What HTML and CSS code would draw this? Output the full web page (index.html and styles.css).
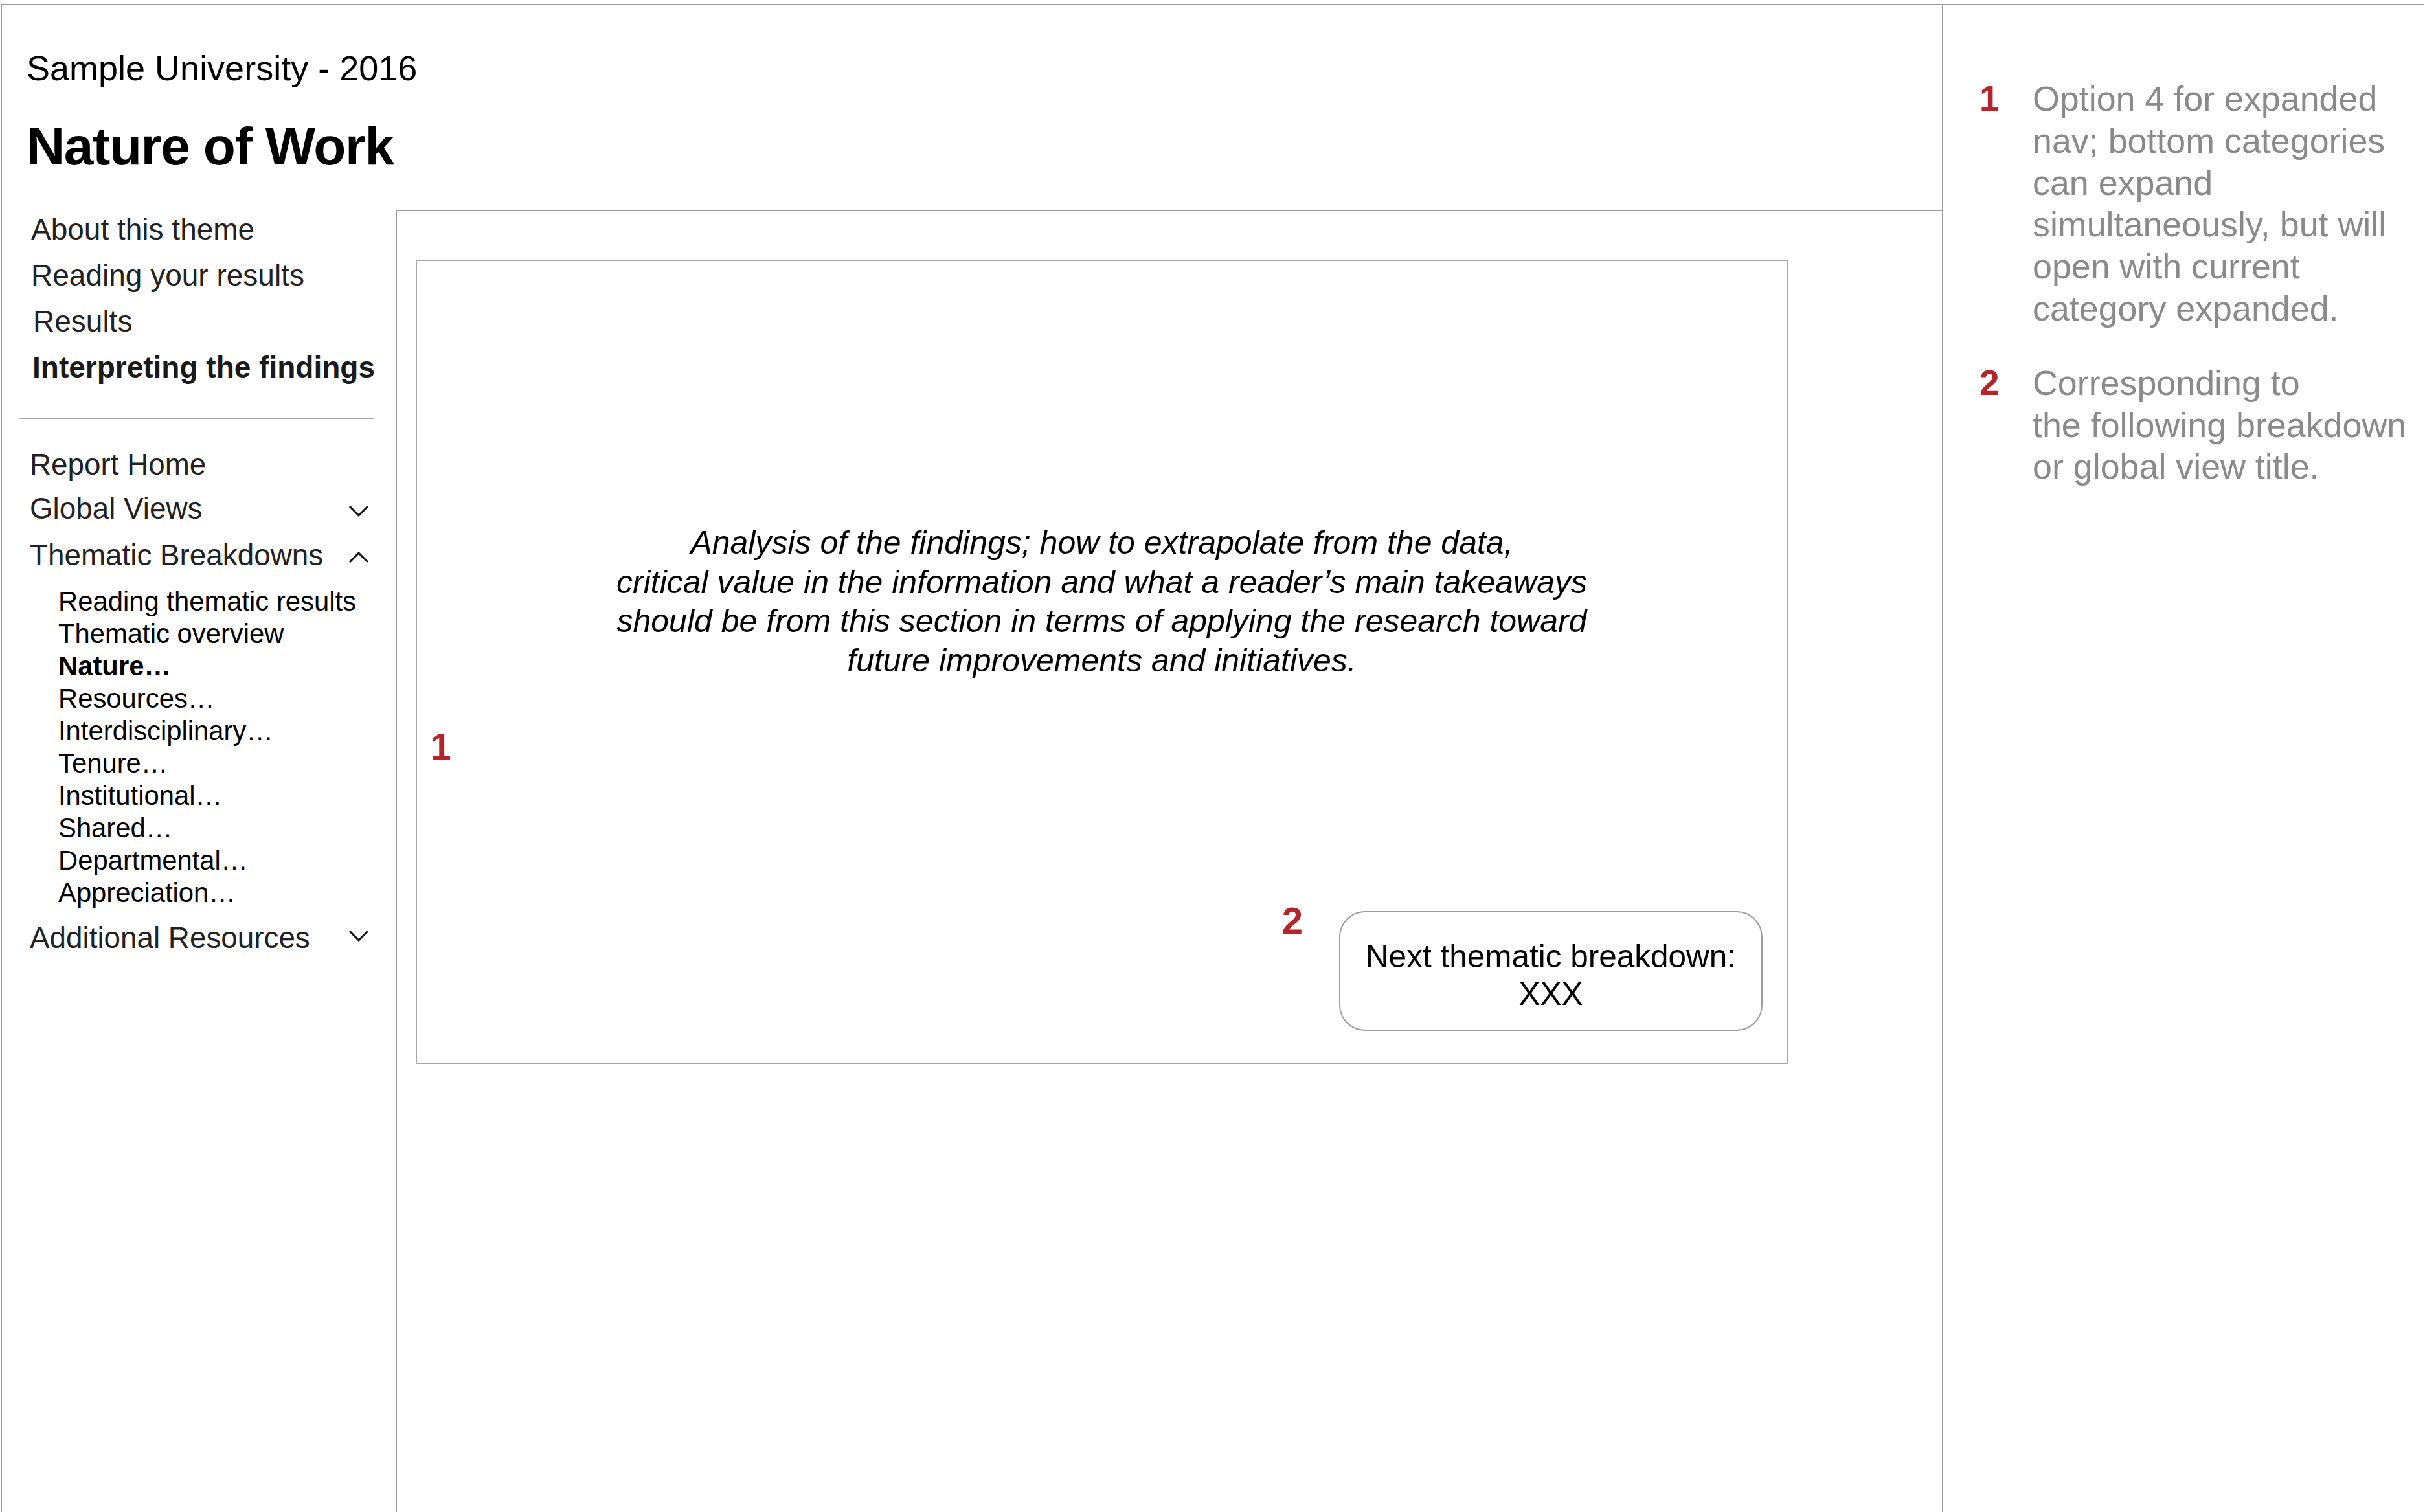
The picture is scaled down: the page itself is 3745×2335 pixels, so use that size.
FILE: index.html
```html
<!DOCTYPE html>
<html lang="en">
<head>
<meta charset="utf-8">
<title>Nature of Work</title>
<link rel="stylesheet" href="styles.css">
</head>
<body>
<div class="frame">
  <div class="work">
    <header class="head">
      <div class="org">Sample University - 2016</div>
      <h1 class="title">Nature of Work</h1>
    </header>
    <div class="body">
      <nav class="side">
        <ul class="nav-top">
          <li>About this theme</li>
          <li>Reading your results</li>
          <li class="nudge">Results</li>
          <li class="current">Interpreting the findings</li>
        </ul>
        <div class="sep"></div>
        <ul class="nav-main">
          <li class="nm-item">Report Home</li>
          <li class="nm-item nm-row nm-global">
            <span>Global Views</span>
            <svg class="chev" viewBox="0 0 32 18" width="32" height="18"><polyline points="2,2 16,16 30,2"/></svg>
          </li>
          <li class="nm-item nm-row nm-thematic">
            <span>Thematic Breakdowns</span>
            <svg class="chev" viewBox="0 0 32 18" width="32" height="18"><polyline points="2,16 16,2 30,16"/></svg>
          </li>
          <li class="sub-wrap">
            <ul class="sub">
              <li>Reading thematic results</li>
              <li>Thematic overview</li>
              <li class="current">Nature…</li>
              <li>Resources…</li>
              <li>Interdisciplinary…</li>
              <li>Tenure…</li>
              <li>Institutional…</li>
              <li>Shared…</li>
              <li>Departmental…</li>
              <li>Appreciation…</li>
            </ul>
          </li>
          <li class="nm-item nm-row nm-additional">
            <span>Additional Resources</span>
            <svg class="chev chev-high" viewBox="0 0 32 18" width="32" height="18"><polyline points="2,2 16,16 30,2"/></svg>
          </li>
        </ul>
      </nav>
      <main class="main">
        <section class="card">
          <p class="lede">Analysis of the findings; how to extrapolate from the data,<br>critical value in the information and what a reader’s main takeaways<br>should be from this section in terms of applying the research toward<br>future improvements and initiatives.</p>
          <div class="marker marker-one">1</div>
          <div class="card-foot">
            <span class="marker marker-two">2</span>
            <div class="next-btn">Next thematic breakdown:<br>XXX</div>
          </div>
        </section>
      </main>
    </div>
  </div>
  <aside class="notes">
    <div class="note">
      <span class="note-num">1</span>
      <p class="note-text">Option 4 for expanded<br>nav; bottom categories<br>can expand<br>simultaneously, but will<br>open with current<br>category expanded.</p>
    </div>
    <div class="note note-second">
      <span class="note-num">2</span>
      <p class="note-text">Corresponding to<br>the following breakdown<br>or global view title.</p>
    </div>
  </aside>
</div>
</body>
</html>
```

FILE: styles.css
```css
* { box-sizing: border-box; }

html, body {
  margin: 0;
  padding: 0;
  background: #ffffff;
  overflow: hidden;
}

body {
  font-family: "Liberation Sans", Arial, Helvetica, sans-serif;
  color: #000;
}

ul { list-style: none; margin: 0; padding: 0; }
p, h1 { margin: 0; }

.frame {
  margin: 6px 1px 0 1px;
  height: calc(100vh - 6px);
  border-top: 2px solid #9a9a9a;
  border-left: 2px solid #9a9a9a;
  border-right: 1px solid #b8b8b8;
  display: flex;
}

/* ---------- left working area ---------- */
.work {
  flex: none;
  width: 2998px;
  border-right: 2px solid #9a9a9a;
  display: flex;
  flex-direction: column;
}

.head {
  flex: none;
  height: 316px;
  padding: 66px 0 0 38px;
}

.org {
  font-size: 54px;
  line-height: 62px;
  color: #000;
}

.title {
  margin-top: 45px;
  font-size: 82px;
  line-height: 90px;
  font-weight: 700;
  letter-spacing: -1.4px;
  color: #000;
}

.body {
  flex: 1;
  display: flex;
  min-height: 0;
}

/* ---------- sidebar ---------- */
.side {
  flex: none;
  width: 608px;
}

.nav-top {
  padding-left: 45px;
  display: flex;
  flex-direction: column;
  gap: 11px;
  font-size: 46px;
  line-height: 60px;
  color: #222;
}

.nav-top .nudge { padding-left: 3px; }

.nav-top .current {
  font-weight: 700;
  color: #1a1a1a;
  padding-left: 2px;
}

.sep {
  margin: 48px 0 0 26px;
  width: 548px;
  height: 2px;
  background: #ababab;
}

.nav-main {
  margin-top: 41px;
  padding: 0 41px 0 43px;
  font-size: 45.8px;
  line-height: 60px;
  color: #222;
}

.nm-row {
  display: flex;
  justify-content: space-between;
  align-items: flex-start;
}

.nm-global { margin-top: 8px; }
.nm-thematic { margin-top: 12px; }
.nm-additional { margin-top: 15px; }

.chev {
  display: block;
  margin-top: 24px;
  width: 32px;
  height: 18px;
  fill: none;
  stroke: #111;
  stroke-width: 3;
  stroke-linecap: butt;
  stroke-linejoin: miter;
}

.chev-high { margin-top: 17px; }

.sub-wrap { margin-top: 16px; }

.sub {
  padding-left: 44px;
  font-size: 41.8px;
  line-height: 50px;
  color: #000;
}

.sub .current { font-weight: 700; }

/* ---------- main content ---------- */
.main {
  flex: 1;
  border-top: 2px solid #9a9a9a;
  border-left: 2px solid #9a9a9a;
  padding: 75px 0 0 29px;
}

.card {
  width: 2119px;
  height: 1242px;
  border: 2px solid #a8a8a8;
  display: flex;
  flex-direction: column;
}

.lede {
  margin-top: 405px;
  text-align: center;
  font-style: italic;
  font-size: 50px;
  line-height: 60.5px;
  color: #000;
}

.marker {
  color: #b3242b;
  font-weight: 700;
  line-height: 60px;
}

.marker-one {
  margin-top: 73px;
  padding-left: 21px;
  font-size: 57px;
}

.card-foot {
  margin-top: auto;
  display: flex;
  justify-content: flex-end;
  align-items: flex-start;
  padding: 0 37px 49px 0;
}

.marker-two {
  font-size: 58px;
  margin-right: 56px;
}

.next-btn {
  margin-top: 15px;
  width: 654px;
  height: 185px;
  border: 2px solid #9c9c9c;
  border-radius: 40px;
  padding-top: 39px;
  text-align: center;
  font-size: 49.5px;
  line-height: 58px;
  color: #000;
}

/* ---------- annotation notes ---------- */
.notes {
  flex: 1;
  padding: 112px 0 0 56px;
}

.note {
  display: flex;
  align-items: flex-start;
}

.note-second { margin-top: 50px; }

.note-num {
  flex: none;
  width: 82px;
  font-size: 55px;
  line-height: 64.8px;
  font-weight: 700;
  color: #b3242b;
}

.note-text {
  font-size: 53.8px;
  line-height: 64.8px;
  color: #8a8a8c;
  white-space: nowrap;
}
```
